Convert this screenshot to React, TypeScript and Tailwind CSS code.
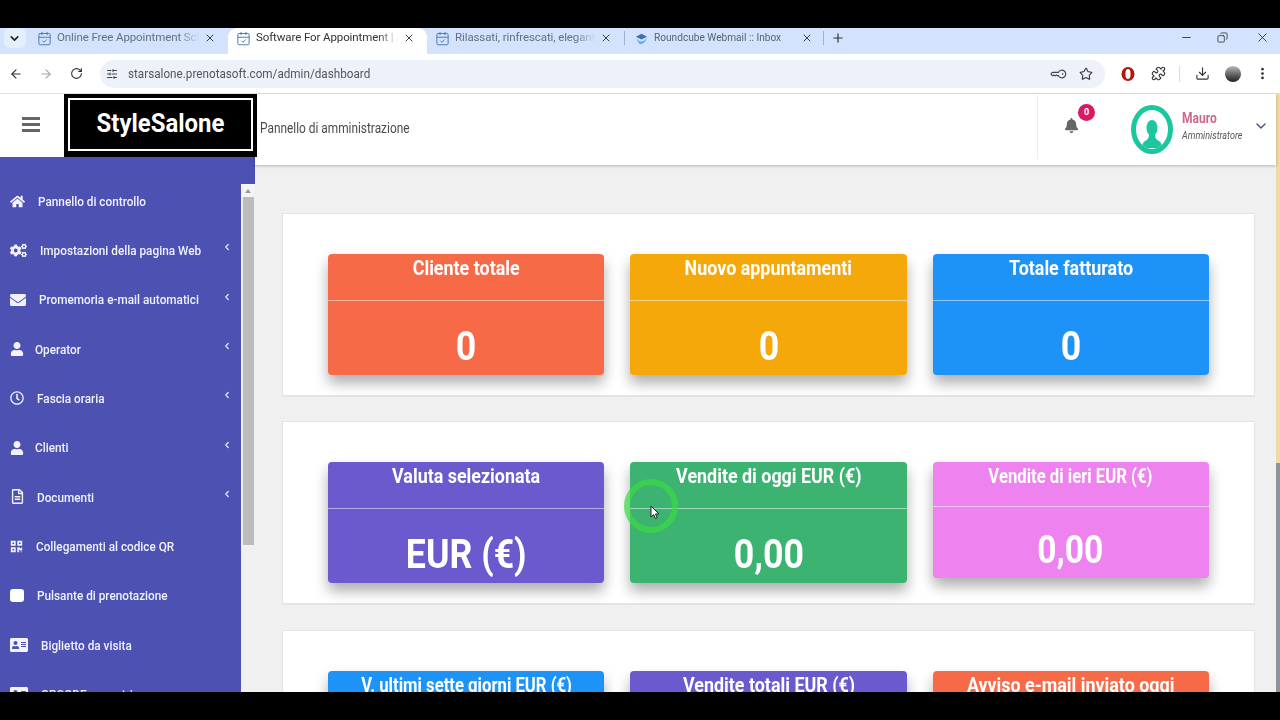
import React from 'react';
import { ChevronDown, X, ArrowLeft, ArrowRight, RotateCw, Star, Puzzle, Download, MoreVertical, Plus, Minus, CalendarCheck, SlidersHorizontal, KeyRound, ChevronLeft, Copy } from 'lucide-react';
import { FaHome, FaCogs, FaEnvelope, FaUser, FaRegClock, FaRegFileAlt, FaQrcode, FaAddressCard, FaBell } from 'react-icons/fa';

const tabs = [
  { t: 'Online Free Appointment Sche', w: 'w-[199px]', active: false },
  { t: 'Software For Appointment | Ad', w: 'w-[199px]', active: true },
  { t: 'Rilassati, rinfrescati, eleganti || H', w: 'w-[197px]', active: false },
];

const menu = [
  { Icon: FaHome, label: 'Pannello di controllo', box: 'w-[28px]', size: 15, arrow: false },
  { Icon: FaCogs, label: 'Impostazioni della pagina Web', box: 'w-[30px]', size: 17, arrow: true },
  { Icon: FaEnvelope, label: 'Promemoria e-mail automatici', box: 'w-[29px]', size: 16, arrow: true },
  { Icon: FaUser, label: 'Operator', box: 'w-[25px]', size: 14, arrow: true },
  { Icon: FaRegClock, label: 'Fascia oraria', box: 'w-[27px]', size: 14, arrow: true },
  { Icon: FaUser, label: 'Clienti', box: 'w-[25px]', size: 14, arrow: true },
  { Icon: FaRegFileAlt, label: 'Documenti', box: 'w-[27px]', size: 15, arrow: true },
  { Icon: FaQrcode, label: 'Collegamenti al codice QR', box: 'w-[26px]', size: 13, arrow: false },
  { Icon: null, label: 'Pulsante di prenotazione', box: 'w-[27px]', size: 14, arrow: false },
  { Icon: FaAddressCard, label: 'Biglietto da visita', box: 'w-[31px]', size: 18, arrow: false },
  { Icon: FaAddressCard, label: 'QRCODE per vetrina', box: 'w-[31px]', size: 18, arrow: false },
];

const rows = [
  [
    { title: 'Cliente totale', value: '0', bg: 'bg-[#f76a48]', h: 'h-[121px]', small: false },
    { title: 'Nuovo appuntamenti', value: '0', bg: 'bg-[#f5a80a]', h: 'h-[121px]', small: false },
    { title: 'Totale fatturato', value: '0', bg: 'bg-[#1e93f7]', h: 'h-[121px]', small: false },
  ],
  [
    { title: 'Valuta selezionata', value: 'EUR (€)', bg: 'bg-[#6a5acd]', h: 'h-[121px]', small: false },
    { title: 'Vendite di oggi EUR (€)', value: '0,00', bg: 'bg-[#3cb371]', h: 'h-[121px]', small: false },
    { title: 'Vendite di ieri EUR (€)', value: '0,00', bg: 'bg-[#ee82ee]', h: 'h-[116px]', small: true },
  ],
  [
    { title: 'V. ultimi sette giorni EUR (€)', value: '0,00', bg: 'bg-[#1e93f7]', h: 'h-[121px]', small: true },
    { title: 'Vendite totali EUR (€)', value: '0,00', bg: 'bg-[#6a5acd]', h: 'h-[121px]', small: false },
    { title: 'Avviso e-mail inviato oggi', value: '0', bg: 'bg-[#f76a48]', h: 'h-[121px]', small: false },
  ],
];

function Cond({ children, className = '', scale = 'scale-x-[0.86]' }: { children: React.ReactNode; className?: string; scale?: string }) {
  return <span className={`inline-block whitespace-nowrap ${scale} ${className}`}>{children}</span>;
}

function Tab({ t, w, active }: { t: string; w: string; active: boolean }) {
  return (
    <div className={`${w} h-[26px] flex items-center pl-[8px] pr-[12px] pb-[6px] shrink-0 ${active ? 'bg-white rounded-t-[9px]' : ''}`}>
      <CalendarCheck size={15} strokeWidth={1.6} className="text-[#4f7fb5] shrink-0" />
      <div className={`ml-[5px] flex-1 min-w-0 overflow-hidden whitespace-nowrap text-[11.5px] tracking-[-0.1px] [mask-image:linear-gradient(to_right,black_85%,transparent)] ${active ? 'text-[#333]' : 'text-[#66707d]'}`}>{t}</div>
      <X size={12} strokeWidth={2} className="text-[#3c4043] shrink-0 ml-[4px]" />
    </div>
  );
}

function Card({ title, value, bg, h, small }: { title: string; value: string; bg: string; h: string; small: boolean }) {
  return (
    <div className={`${bg} ${h} rounded-[4px] shadow-[0_8px_14px_rgba(0,0,0,0.32)] text-white flex flex-col text-center overflow-hidden`}>
      <div className={`border-b border-white/50 pt-[1px] leading-[27px] font-bold ${small ? 'h-[45px] text-[19.4px]' : 'h-[47px] text-[20.8px]'}`}>
        <Cond>{title}</Cond>
      </div>
      <div className={`flex-1 flex items-center justify-center font-bold leading-none pt-[15px] ${small ? 'text-[39px]' : 'text-[41.5px]'}`}>
        <Cond>{value}</Cond>
      </div>
    </div>
  );
}

export default function App() {
  return (
    <div className="w-[1280px] h-[720px] bg-black overflow-hidden flex flex-col py-[28px] font-['Roboto',sans-serif]">
      {/* tab strip */}
      <div className="h-[26px] bg-[#d3e3fd] flex items-center shrink-0">
        <div className="w-[29px] flex items-center justify-center pb-[6px] shrink-0">
          <div className="w-[22px] h-[20px] rounded-[6px] bg-[#e4eefd] flex items-center justify-center">
            <ChevronDown size={13} strokeWidth={3} className="text-[#222]" />
          </div>
        </div>
        <Tab {...tabs[0]} />
        <Tab {...tabs[1]} />
        <Tab {...tabs[2]} />
        <div className="w-px h-[14px] bg-[#9fb3cc] -translate-y-[3px]" />
        <div className="w-[198px] flex items-center pl-[9px] pr-[10px] pb-[6px] shrink-0">
          <svg width="15" height="15" viewBox="0 0 16 16" className="shrink-0">
            <path d="M2 6 L8 3 L14 6 L8 9 Z" fill="#3f6fa8" />
            <path d="M3 8 Q8 15 14 7 Q12 14 7 14 Q4 13 3 8 Z" fill="#5fb4e6" />
          </svg>
          <div className="ml-[5px] flex-1 min-w-0 text-[11.5px] text-[#5a636e] whitespace-nowrap origin-left scale-x-[0.88]">Roundcube Webmail :: Inbox</div>
          <X size={12} strokeWidth={2} className="text-[#3c4043] ml-[4px] shrink-0" />
        </div>
        <div className="w-px h-[14px] bg-[#9fb3cc] -translate-y-[3px]" />
        <Plus size={14} strokeWidth={2} className="text-[#333] ml-[7px] -translate-y-[3px]" />
        <div className="flex-1" />
        <Minus size={13} strokeWidth={1.5} className="text-[#222] mr-[24px] -translate-y-[4px]" />
        <Copy size={11} strokeWidth={1.6} className="text-[#222] mr-[27px] -scale-x-100 -translate-y-[4px]" />
        <X size={15} strokeWidth={1.3} className="text-[#222] mr-[10px] -translate-y-[4px]" />
      </div>

      {/* toolbar */}
      <div className="h-[40px] bg-white flex items-center shrink-0 border-b border-[#e3e3e3]">
        <ArrowLeft size={14} strokeWidth={2} className="text-[#333] ml-[9px]" />
        <ArrowRight size={14} strokeWidth={2} className="text-[#a8a8a8] ml-[16px]" />
        <RotateCw size={13} strokeWidth={2} className="text-[#333] ml-[17px]" />
        <div className="ml-[17px] w-[1005px] h-[28px] rounded-full bg-[#edf2fa] flex items-center pl-[6px] pr-[12px]">
          <SlidersHorizontal size={12} strokeWidth={2} className="text-[#444]" />
          <div className="ml-[10px] text-[13px] text-[#555] flex-1 whitespace-nowrap origin-left scale-x-[0.9]">starsalone.prenotasoft.com/admin/dashboard</div>
          <KeyRound size={14} strokeWidth={2} className="text-[#444] rotate-[45deg] mr-[13px]" />
          <Star size={14} strokeWidth={1.8} className="text-[#333]" />
        </div>
        <svg width="16" height="16" viewBox="0 0 16 16" className="ml-[15px]">
          <ellipse cx="8" cy="8" rx="6.5" ry="7" fill="#b3160d" />
          <ellipse cx="8" cy="8" rx="2.6" ry="5" fill="#fff" />
        </svg>
        <Puzzle size={15} strokeWidth={1.8} className="text-[#333] ml-[15px]" />
        <div className="w-px h-[16px] bg-[#d8dde3] ml-[13px]" />
        <Download size={15} strokeWidth={1.8} className="text-[#333] ml-[15px]" />
        <div className="w-[16px] h-[16px] rounded-full bg-gradient-to-b from-[#bbb] to-[#222] ml-[15px]" />
        <MoreVertical size={15} strokeWidth={2.4} className="text-[#333] ml-[14px]" />
      </div>

      {/* page */}
      <div className="flex-1 flex min-h-0 relative">
        {/* left column */}
        <div className="w-[255px] shrink-0 flex flex-col">
          <div className="h-[63px] bg-white flex items-center shrink-0 relative z-10">
            <div className="w-[64px] shrink-0 flex justify-center pr-[3px] -translate-y-[1px]">
              <div className="w-[18px] flex flex-col gap-[3px]">
                <div className="h-[3px] bg-[#666]" />
                <div className="h-[3px] bg-[#666]" />
                <div className="h-[3px] bg-[#666]" />
              </div>
            </div>
            <div className="w-[193px] h-[63px] shrink-0 bg-black p-[4px]">
              <div className="w-full h-[53px] border-2 border-white text-white text-center text-[26px] leading-[48px] font-bold">
                <Cond scale="scale-x-[0.92]" className="-translate-y-[1px]">StyleSalone</Cond>
              </div>
            </div>
          </div>
          <div className="flex-1 flex min-h-0 bg-[#f0f0f0]">
            <nav className="w-[241px] bg-[#4c51b2] pt-[19.5px] overflow-hidden shrink-0">
              {menu.map(({ Icon, label, box, size, arrow }) => (
                <div key={label + box} className="h-[49.3px] flex items-center pl-[10px] pr-[10px] text-white text-[13.7px] font-medium">
                  <div className={`${box} shrink-0 flex items-center`}>
                    {Icon ? <Icon size={size} className="text-[#f2f3ff]" /> : <div className="w-[14px] h-[13px] rounded-[3px] bg-white" />}
                  </div>
                  <div className="flex-1 min-w-0">
                    <Cond className="origin-left text-[#f0f1ff]">{label}</Cond>
                  </div>
                  {arrow && <ChevronLeft size={10} strokeWidth={3} className="text-[#e6e8ff] -translate-y-[3px] mr-[-1px]" />}
                </div>
              ))}
            </nav>
            <div className="w-[14px] flex flex-col shrink-0">
              <div className="h-[27px] bg-[#4c51b2] shrink-0" />
              <div className="w-[13px] flex-1 flex flex-col">
                <div className="h-[13px] bg-[#f5f5f5] flex items-center justify-center">
                  <div className="w-0 h-0 border-x-[3px] border-x-transparent border-b-[4px] border-b-[#999]" />
                </div>
                <div className="h-[348px] bg-[#bcbcbc] ml-[2px]" />
              </div>
            </div>
          </div>
        </div>

        {/* right column */}
        <div className="flex-1 min-w-0 flex flex-col">
          <header className="h-[71px] bg-white shadow-[0_1px_3px_rgba(0,0,0,0.25)] flex items-center shrink-0 relative z-[5]">
            <div className="pl-[5px] text-[13.8px] text-[#4a4a4a] -translate-y-[1px] flex-1">
              <Cond className="origin-left">Pannello di amministrazione</Cond>
            </div>
            <div className="w-px h-[64px] bg-[#eeeeee] -translate-y-[3px]" />
            <div className="w-[238px] flex items-center relative h-full">
              <div className="absolute left-[26px] top-[24px]">
                <FaBell size={15} className="text-[#666]" />
              </div>
              <div className="absolute left-[40px] top-[10px] w-[17px] h-[17px] rounded-full bg-[#d81b60] text-white text-[9px] font-bold flex items-center justify-center">0</div>
              <div className="ml-[93px] w-[42px] h-[49px] shrink-0 rounded-[50%] border-[5px] border-[#1cc79e] flex items-end justify-center overflow-hidden">
                <svg width="24" height="34" viewBox="0 0 24 34">
                  <ellipse cx="12" cy="13" rx="5.5" ry="8" fill="#1cc79e" />
                  <path d="M9 20 H15 Q15 24 19 26 Q23 29 21 33 H3 Q1 29 5 26 Q9 24 9 20 Z" fill="#1cc79e" />
                </svg>
              </div>
              <div className="ml-[9px] -translate-y-[3px] flex flex-col gap-[4px] w-[66px] shrink-0">
                <div className="text-[14px] leading-[15px] font-bold text-[#d0668c]"><Cond className="origin-left">Mauro</Cond></div>
                <div className="text-[10.5px] leading-[12px] italic text-[#555]"><Cond className="origin-left">Amministratore</Cond></div>
              </div>
              <ChevronDown size={16} strokeWidth={2} className="text-[#4a4a78] ml-[5px] -translate-y-[4px] shrink-0" />
            </div>
          </header>
          <main className="flex-1 min-h-0 overflow-hidden bg-[#f0f0f0] pl-[27px] pr-[21px] pt-[48px] flex flex-col gap-[24.5px]">
            {rows.map((row, i) => (
              <section key={i} className="bg-white border border-[#e4e4e4] border-b-2 shrink-0 h-[183.9px] grid grid-cols-3 gap-x-[26px] items-start px-[45px] pt-[40px]">
                {row.map(c => <Card key={c.title} {...c} />)}
              </section>
            ))}
          </main>
        </div>

        {/* page scrollbar */}
        <div className="w-[4px] shrink-0 flex flex-col">
          <div className="h-[369px] bg-[#f3d9a4]" />
          <div className="flex-1 bg-[#8b969c]" />
        </div>

        {/* recorded pointer highlight */}
        <div className="absolute left-[624px] top-[385px] w-[54px] h-[54px] rounded-full border-[6px] border-[#39dc44]/70 z-20" />
        <svg width="10" height="15" viewBox="0 0 10 15" className="absolute left-[650px] top-[411px] z-20">
          <path d="M1 1 V12 L3.6 9.6 L5.4 13.5 L7.2 12.7 L5.4 9 H9 Z" fill="#fff" stroke="#222" strokeWidth="1" />
        </svg>
      </div>
    </div>
  );
}
